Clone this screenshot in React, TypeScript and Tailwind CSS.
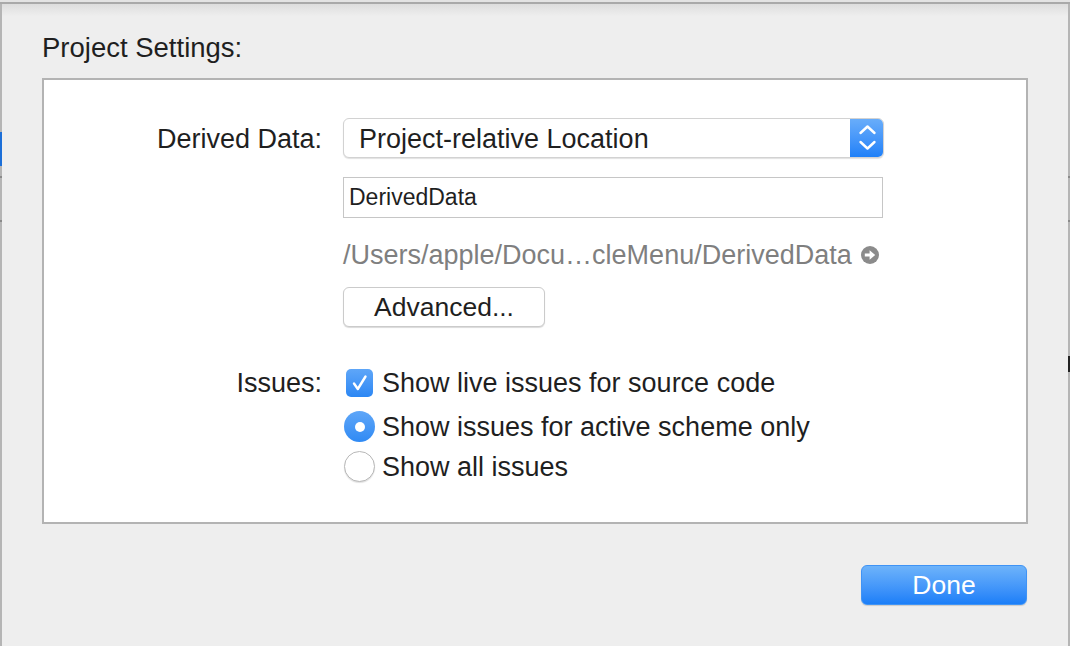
import React from 'react';

const font = { fontFamily: '"Liberation Sans", Arial, sans-serif' };

function Chevrons() {
  return (
    <svg width="33" height="40" viewBox="0 0 33 40" fill="none">
      <path d="M9.5 15 L16.5 8.5 L23.5 15" stroke="white" strokeWidth="2.4" strokeLinecap="round" strokeLinejoin="round" />
      <path d="M9.5 24 L16.5 30.5 L23.5 24" stroke="white" strokeWidth="2.4" strokeLinecap="round" strokeLinejoin="round" />
    </svg>
  );
}

function ArrowCircle() {
  return (
    <svg width="18" height="18" viewBox="0 0 18 18">
      <circle cx="9" cy="9" r="9" fill="#8b8b8b" />
      <path d="M3.8 7.4 H8.6 V4.2 L14.2 9 L8.6 13.8 V10.6 H3.8 Z" fill="white" />
    </svg>
  );
}

function Checkbox() {
  return (
    <div className="ml-[3px] mr-[9px] flex h-[28px] w-[27px] items-center justify-center rounded-[5px] bg-linear-to-b from-[#5ea6f8] to-[#2b87f4]">
      <svg width="27" height="28" viewBox="0 0 27 28" fill="none">
        <path d="M8 14.5 L11.8 20 L19.5 7.5" stroke="white" strokeWidth="2.4" strokeLinecap="round" strokeLinejoin="round" />
      </svg>
    </div>
  );
}

function Radio({ checked }: { checked?: boolean }) {
  if (checked) {
    return (
      <div className="ml-[1px] mr-[7px] flex h-[31px] w-[31px] items-center justify-center rounded-full bg-linear-to-b from-[#5ea6f8] to-[#2f8af4]">
        <div className="h-[10px] w-[10px] rounded-full bg-white" />
      </div>
    );
  }
  return (
    <div className="ml-[1px] mr-[7px] h-[31px] w-[31px] rounded-full border border-[#b8b8b8] bg-white shadow-[0_1px_1px_rgba(0,0,0,0.12)]" />
  );
}

export default function App() {
  return (
    <div className="relative flex h-[646px] w-[1070px] flex-col overflow-hidden bg-[#eeeeee] text-[#1f1f1f]" style={font}>
      <div className="h-[2px] bg-[#e3e3e3]" />
      <div className="h-[2px] bg-[#a9a9a9]" />
      <div className="flex flex-1 flex-col border-x-2 border-[#b5b5b5]">
        <div className="h-[12px] bg-linear-to-b from-[#dddddd] to-[#eeeeee]" />

        <div className="flex flex-col px-[40px] pt-[16px]">
          <div className="pt-[1px] text-[27.5px] leading-[29px]">Project Settings:</div>

          <div className="mt-[16px] h-[446px] border-2 border-[#b3b3b3] bg-white pt-[38px]">
            <div className="flex">
              <div className="flex h-[40px] w-[278px] items-center justify-end pt-[2px] text-[27px]">Derived Data:</div>
              <div className="ml-[21px] flex flex-col">
                <div className="flex h-[40px] w-[541px] overflow-hidden rounded-[6px] border border-[#d2d2d2] bg-white shadow-[0_1px_1px_rgba(0,0,0,0.12)]">
                  <div className="flex flex-1 items-center pl-[15px] pt-[2px] text-[27px]">Project-relative Location</div>
                  <div className="-my-px -mr-px flex w-[34px] items-center justify-center bg-linear-to-b from-[#6aaefa] to-[#1b7ff8]">
                    <Chevrons />
                  </div>
                </div>

                <div className="mt-[19px] flex h-[41px] w-[540px] items-center border border-[#c6c6c6] pl-[5px] text-[23px]">DerivedData</div>

                <div className="mt-[22px] flex h-[30px] items-center gap-[9px] text-[27px] text-[#7f7f7f]">
                  <span className="pt-[1px]">/Users/apple/Docu…cleMenu/DerivedData</span>
                  <ArrowCircle />
                </div>

                <button className="mt-[17px] flex h-[40px] w-[202px] items-center justify-center rounded-[6px] border border-[#cbcbcb] bg-white pt-[1px] text-[26.5px] shadow-[0_1px_1px_rgba(0,0,0,0.15)]">
                  Advanced...
                </button>
              </div>
            </div>

            <div className="mt-[41px] flex">
              <div className="flex h-[30px] w-[278px] items-center justify-end pt-[1px] text-[27px]">Issues:</div>
              <div className="ml-[21px] flex flex-col text-[27px]">
                <div className="flex h-[30px] items-center">
                  <Checkbox />
                  <span className="pt-[1px]">Show live issues for source code</span>
                </div>
                <div className="mt-[13px] flex h-[31px] items-center">
                  <Radio checked />
                  <span className="pt-[1px]">Show issues for active scheme only</span>
                </div>
                <div className="mt-[9px] flex h-[31px] items-center">
                  <Radio />
                  <span className="pt-[1px]">Show all issues</span>
                </div>
              </div>
            </div>
          </div>

          <div className="mt-[41px] flex justify-end">
            <button className="mr-[1px] flex h-[40px] w-[166px] items-center justify-center rounded-[6px] border border-[#3f93f5] bg-linear-to-b from-[#6db3fa] to-[#1a7ef8] pt-[1px] text-[26.5px] text-white shadow-[0_1px_1px_rgba(0,0,0,0.15)]">
              Done
            </button>
          </div>
        </div>
      </div>

      <div className="absolute left-0 top-[132px] h-[34px] w-[2px] bg-[#1c6fd8]" />
      <div className="absolute left-0 top-[176px] h-[2px] w-[2px] bg-[#8a8a8a]" />
      <div className="absolute left-0 top-[220px] h-[2px] w-[2px] bg-[#8a8a8a]" />
      <div className="absolute right-0 top-[176px] h-[2px] w-[2px] bg-[#8a8a8a]" />
      <div className="absolute right-0 top-[220px] h-[2px] w-[2px] bg-[#8a8a8a]" />
      <div className="absolute right-0 top-[356px] h-[16px] w-[2px] bg-[#222222]" />
    </div>
  );
}
